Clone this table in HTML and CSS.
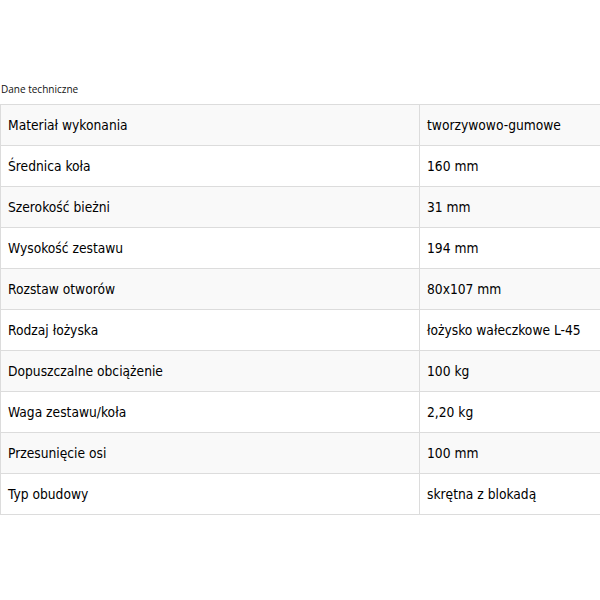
FILE: index.html
```html
<!DOCTYPE html>
<html lang="pl">
<head>
<meta charset="utf-8">
<link rel="stylesheet" href="styles.css">
</head>
<body>
<div class="wrap">
  <div class="caption">Dane techniczne</div>
  <table class="spec">
    <tr><td>Materiał wykonania</td><td>tworzywowo-gumowe</td></tr>
    <tr><td>Średnica koła</td><td>160 mm</td></tr>
    <tr><td>Szerokość bieżni</td><td>31 mm</td></tr>
    <tr><td>Wysokość zestawu</td><td>194 mm</td></tr>
    <tr><td>Rozstaw otworów</td><td>80x107 mm</td></tr>
    <tr><td>Rodzaj łożyska</td><td>łożysko wałeczkowe L-45</td></tr>
    <tr><td>Dopuszczalne obciążenie</td><td>100 kg</td></tr>
    <tr><td>Waga zestawu/koła</td><td>2,20 kg</td></tr>
    <tr><td>Przesunięcie osi</td><td>100 mm</td></tr>
    <tr><td>Typ obudowy</td><td>skrętna z blokadą</td></tr>
  </table>
</div>
</body>
</html>
```
FILE: styles.css
```css
html, body {
  margin: 0;
  padding: 0;
  background: #ffffff;
}
.wrap {
  padding-top: 82px;
}
.caption {
  font-family: "Open Sans", sans-serif;
  font-size: 10px;
  line-height: 14px;
  color: #111;
  padding-left: 1px;
  margin-bottom: 8px;
}
.spec {
  border-collapse: collapse;
  width: 601px;
  font-family: "DejaVu Sans Condensed", "DejaVu Sans", sans-serif;
  font-stretch: condensed;
  font-size: 13.7px;
  color: #000;
}
.spec td {
  height: 40px;
  padding: 0 7px;
  border: 1px solid #dcdcdc;
  vertical-align: middle;
}
.spec td:first-child {
  width: 404px;
}
.spec tr:nth-child(odd) td {
  background: #f9f9f9;
}
```
